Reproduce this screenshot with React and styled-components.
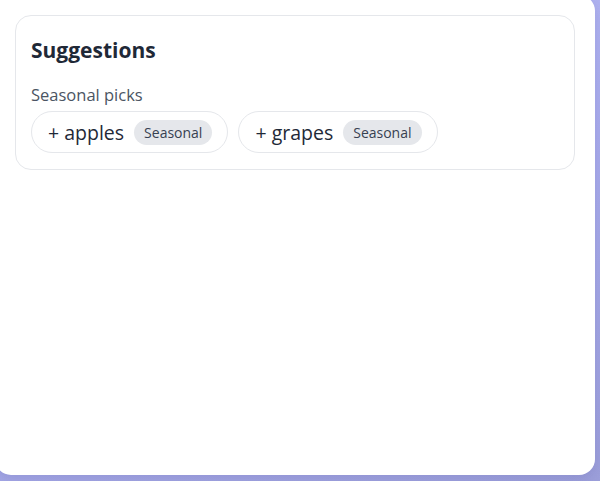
import React from "react";
import styled, { createGlobalStyle } from "styled-components";

const GlobalStyle = createGlobalStyle`
  html, body {
    margin: 0;
    padding: 0;
    width: 600px;
    height: 481px;
    overflow: hidden;
    background: linear-gradient(160deg, #b9bcf6 0%, #a9acec 50%, #9c9fda 100%);
    font-family: "Open Sans", "Noto Sans", sans-serif;
  }
`;

const Panel = styled.div`
  margin: -5px 0 0 -5px;
  width: 600px;
  height: 480px;
  box-sizing: border-box;
  padding: 20px;
  background: #ffffff;
  border-radius: 16px;
  box-shadow: 0 4px 12px rgba(60, 60, 140, 0.15);
`;

const Card = styled.section`
  border: 1px solid #e5e7eb;
  border-radius: 16px;
  padding: 16px 15px 16px;
`;

const Title = styled.h2`
  margin: 4px 0 20px;
  font-size: 21px;
  line-height: 28px;
  font-weight: 700;
  color: #1f2937;
`;

const Subtitle = styled.p`
  margin: 0 0 5px;
  font-size: 16.5px;
  line-height: 22px;
  color: #4b5563;
`;

const ChipRow = styled.div`
  display: flex;
  flex-wrap: wrap;
  gap: 10px;
`;

const Chip = styled.button`
  display: flex;
  align-items: center;
  gap: 10px;
  height: 42px;
  box-sizing: border-box;
  padding: 0 15px 0 16px;
  border: 1px solid #e5e7eb;
  border-radius: 999px;
  background: #ffffff;
  font-family: inherit;
  font-size: 19.5px;
  color: #1f2937;
  cursor: pointer;
`;

const Badge = styled.span`
  display: inline-flex;
  align-items: center;
  height: 25px;
  padding: 0 10px;
  border-radius: 999px;
  background: #e5e7eb;
  font-size: 14px;
  color: #374151;
`;

const items = ["apples", "grapes"];

export default function App() {
  return (
    <>
      <GlobalStyle />
      <Panel>
        <Card>
          <Title>Suggestions</Title>
          <Subtitle>Seasonal picks</Subtitle>
          <ChipRow>
            {items.map((name) => (
              <Chip key={name}>
                + {name}
                <Badge>Seasonal</Badge>
              </Chip>
            ))}
          </ChipRow>
        </Card>
      </Panel>
    </>
  );
}
